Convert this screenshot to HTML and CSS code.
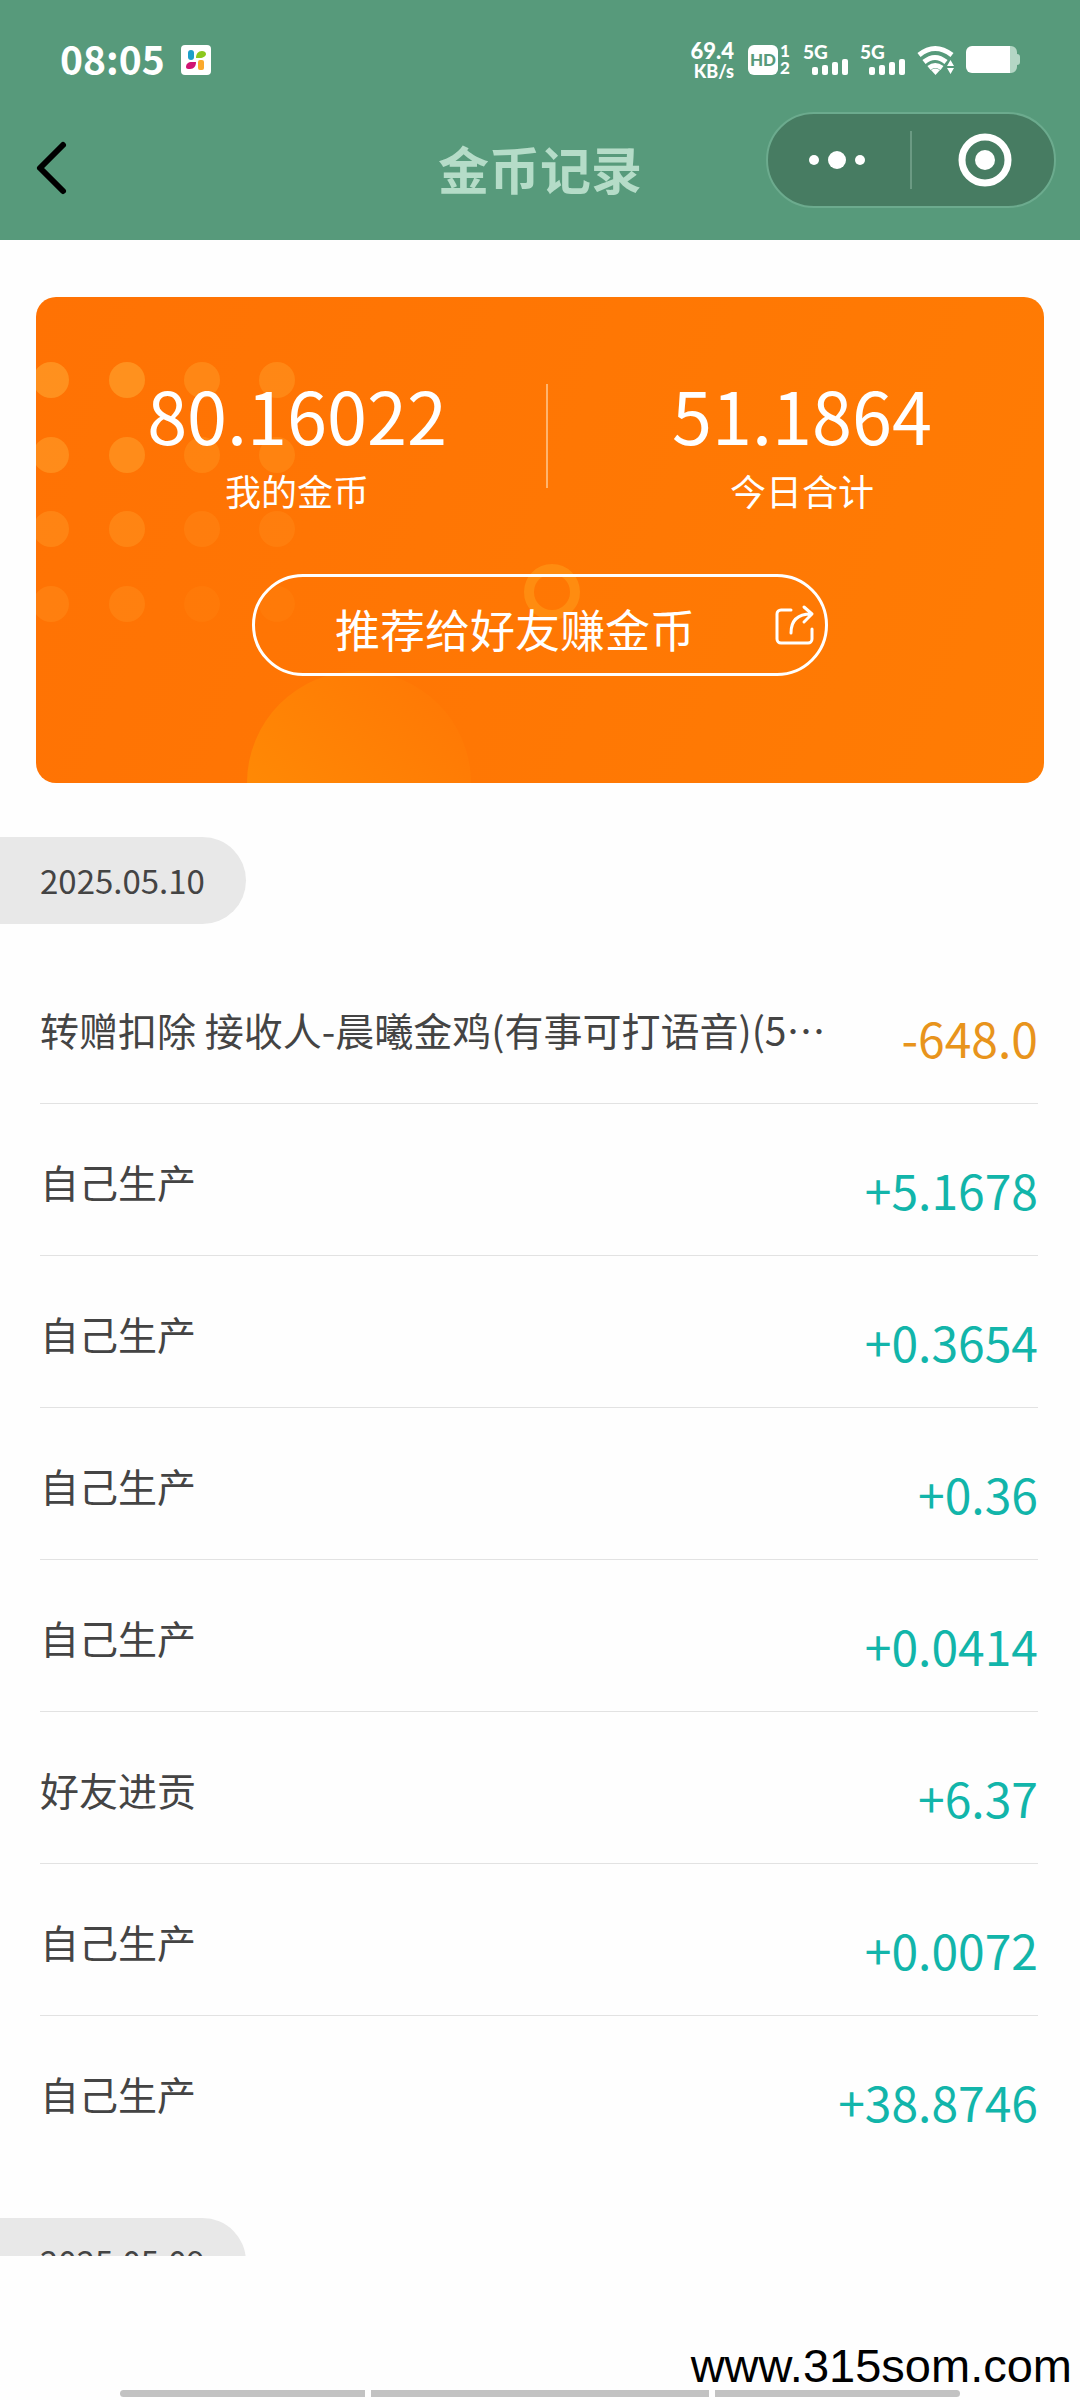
FILE: index.html
```html
<!DOCTYPE html>
<html lang="zh-CN">
<head>
    <meta charset="UTF-8">
    <meta name="viewport" content="width=device-width, initial-scale=1.0">
    <title>金币记录</title>
    <link rel="stylesheet" href="styles.css">
</head>
<body>

<header class="header">
    <div class="status-bar">
        <span class="time">08:05</span>
        <svg class="app-icon" width="30" height="30" viewBox="0 0 30 30">
            <rect width="30" height="30" rx="4" fill="#fff"/>
            <rect x="7" y="5" width="6" height="10" rx="3" fill="#1d9fc9"/>
            <path d="M15 13c0-4 2-7 6-7 2 0 4 1 4 3s-3 4-6 4z" fill="#8cc81e"/>
            <path d="M5 22c0-3 2-5 6-5h4c0 4-2 7-6 7-2 0-4 0-4-2z" fill="#d01472"/>
            <rect x="17" y="15" width="6" height="10" rx="2" fill="#fba92c"/>
        </svg>
        <div class="net-speed">
            <span class="speed-value">69.4</span>
            <span class="speed-unit">KB/s</span>
        </div>
        <svg class="hd" width="43" height="32" viewBox="0 0 43 32">
            <rect y="1" width="30" height="30" rx="6" fill="#fff"/>
            <text x="15" y="22" class="hd-text">HD</text>
            <text x="37" y="13" class="hd-num">1</text>
            <text x="37" y="30" class="hd-num">2</text>
        </svg>
        <svg class="signal" width="45" height="32" viewBox="0 0 45 32">
            <text x="0" y="15" class="signal-text">5G</text>
            <g fill="#fff">
                <rect x="9" y="23" width="6" height="8" rx="2"/>
                <rect x="19" y="21" width="6" height="10" rx="2"/>
                <rect x="29" y="18" width="6" height="13" rx="2"/>
                <rect x="39" y="15" width="6" height="16" rx="2"/>
            </g>
        </svg>
        <svg class="signal" width="45" height="32" viewBox="0 0 45 32">
            <text x="0" y="15" class="signal-text">5G</text>
            <g fill="#fff">
                <rect x="9" y="23" width="6" height="8" rx="2"/>
                <rect x="19" y="21" width="6" height="10" rx="2"/>
                <rect x="29" y="18" width="6" height="13" rx="2"/>
                <rect x="39" y="15" width="6" height="16" rx="2"/>
            </g>
        </svg>
        <svg class="wifi" width="38" height="32" viewBox="0 0 38 32">
            <g fill="none" stroke="#fff" stroke-width="5">
                <path d="M2 11q16-13 33 0"/>
                <path d="M7 18q11-9 22 0"/>
                <path d="M12 24q6-5 13 0"/>
            </g>
            <path d="M14 26q4-3 9 0l-4.500 5z" fill="#fff"/>
            <path d="M30 22l3.500-6 3.500 6zM30 24h7l-3.500 6z" fill="#fff"/>
        </svg>
        <svg class="battery" width="54" height="28" viewBox="0 0 54 28">
            <path d="M7 0h38a6 6 0 0 1 6 6v2a3 3 0 0 1 3 3v5a3 3 0 0 1-3 3v2a6 6 0 0 1-6 6H7z" fill="#b4d6c5"/>
            <path d="M6 0h38v27H6a6 6 0 0 1-6-6V6a6 6 0 0 1 6-6z" fill="#fff"/>
        </svg>
    </div>

    <div class="nav">
        <button class="back" aria-label="返回">
            <svg width="30" height="52" viewBox="0 0 30 52">
                <path d="M27 3L4 26l23 23" fill="none" stroke="#000" stroke-width="6" stroke-linecap="round" stroke-linejoin="round"/>
            </svg>
        </button>
        <h1 class="nav-title">金币记录</h1>
        <div class="capsule">
            <button class="capsule-btn capsule-more" aria-label="更多">
                <svg width="58" height="20" viewBox="0 0 58 20" fill="#fff">
                    <circle cx="6" cy="10" r="5"/>
                    <circle cx="29" cy="10" r="9"/>
                    <circle cx="52" cy="10" r="5"/>
                </svg>
            </button>
            <button class="capsule-btn capsule-close" aria-label="关闭">
                <svg width="54" height="54" viewBox="0 0 54 54">
                    <circle cx="27" cy="27" r="23" fill="none" stroke="#fff" stroke-width="7"/>
                    <circle cx="27" cy="27" r="10" fill="#fff"/>
                </svg>
            </button>
        </div>
    </div>
</header>

<main class="content">
    <section class="card">
        <svg class="card-bg" viewBox="0 0 1008 486" preserveAspectRatio="xMinYMin slice">
            <defs>
                <linearGradient id="bubble" x1="0" y1="1" x2="1" y2="0">
                    <stop offset="0" stop-color="#ff8f05"/>
                    <stop offset="1" stop-color="#ff7605"/>
                </linearGradient>
            </defs>
            <g fill="#ffa530">
                <g opacity="0.6"><circle cx="15" cy="83" r="18"/><circle cx="91" cy="83" r="18"/></g>
                <g opacity="0.4"><circle cx="166" cy="83" r="18"/><circle cx="241" cy="83" r="18"/></g>
                <g opacity="0.5"><circle cx="15" cy="158" r="18"/><circle cx="91" cy="158" r="18"/></g>
                <g opacity="0.3"><circle cx="166" cy="158" r="18"/><circle cx="241" cy="158" r="18"/></g>
                <g opacity="0.35"><circle cx="15" cy="232" r="18"/><circle cx="91" cy="232" r="18"/></g>
                <g opacity="0.2"><circle cx="166" cy="232" r="18"/><circle cx="241" cy="232" r="18"/></g>
                <g opacity="0.25"><circle cx="15" cy="307" r="18"/><circle cx="91" cy="307" r="18"/></g>
                <g opacity="0.1"><circle cx="166" cy="307" r="18"/><circle cx="241" cy="307" r="18"/></g>
            </g>
            <circle cx="323" cy="486" r="112" fill="url(#bubble)"/>
            <circle cx="516" cy="295" r="23" fill="none" stroke="#ff8c10" stroke-width="10"/>
        </svg>
        <div class="stats">
            <div class="stat">
                <div class="stat-value">80.16022</div>
                <div class="stat-label">我的金币</div>
            </div>
            <div class="stat stat-today">
                <div class="stat-value">51.1864</div>
                <div class="stat-label">今日合计</div>
            </div>
        </div>
        <button class="share">
            <span class="share-text">推荐给好友赚金币</span>
            <svg width="40" height="40" viewBox="0 0 40 40" fill="none" stroke="#fff" stroke-width="3" stroke-linecap="round" stroke-linejoin="round">
                <path d="M16 5H6a4 4 0 0 0-4 4v25a4 4 0 0 0 4 4h27a4 4 0 0 0 4-4V24"/>
                <path d="M16 28c0-12 6-19 20-19M29 2l8 7-8 8"/>
            </svg>
        </button>
    </section>

    <div class="date">2025.05.10</div>
    <ul class="records">
        <li class="record"><span class="name">转赠扣除 接收人-晨曦金鸡(有事可打语音)(5…</span><span class="amount minus">-648.0</span></li>
        <li class="record"><span class="name">自己生产</span><span class="amount">+5.1678</span></li>
        <li class="record"><span class="name">自己生产</span><span class="amount">+0.3654</span></li>
        <li class="record"><span class="name">自己生产</span><span class="amount">+0.36</span></li>
        <li class="record"><span class="name">自己生产</span><span class="amount">+0.0414</span></li>
        <li class="record"><span class="name">好友进贡</span><span class="amount">+6.37</span></li>
        <li class="record"><span class="name">自己生产</span><span class="amount">+0.0072</span></li>
        <li class="record"><span class="name">自己生产</span><span class="amount">+38.8746</span></li>
    </ul>

    <div class="date">2025.05.09</div>
</main>

<footer class="footer">
    <div class="site">www.315som.com</div>
    <div class="gesture-bar">
        <span class="bar"></span>
        <span class="bar bar-home"></span>
        <span class="bar"></span>
    </div>
</footer>

</body>
</html>
```
FILE: styles.css
```css
* {
    box-sizing: border-box;
}
body {
    font-family: "Noto Sans CJK SC", sans-serif;
    display: flex;
    flex-direction: column;
    height: 100vh;
    margin: 0;
    background-color: #fefefe;
    color: #444;
}
button {
    font-family: inherit;
    color: inherit;
    background: none;
    border: none;
    padding: 0;
    cursor: pointer;
}
svg {
    display: block;
    flex: none;
    overflow: visible;
}

/* header */
.header {
    flex: none;
    background-color: #579a7b;
    color: #fff;
}
.status-bar {
    display: flex;
    align-items: center;
    height: 96px;
    padding: 24px 60px 0;
}
.time {
    font-size: 39px;
    line-height: 68px;
    font-weight: bold;
    padding-bottom: 4px;
}
.app-icon {
    margin-left: 16px;
}
.net-speed {
    display: flex;
    flex-direction: column;
    align-items: flex-end;
    margin-left: auto;
    font-family: Lato, sans-serif;
    font-weight: 900;
}
.speed-value {
    font-size: 22px;
    line-height: 22px;
}
.speed-unit {
    font-size: 18px;
    line-height: 18px;
}
.hd {
    margin-left: 14px;
}
.hd-text, .hd-num, .signal-text {
    font-family: Lato, sans-serif;
    font-weight: 900;
    fill: #fff;
}
.hd-text {
    font-size: 17px;
    text-anchor: middle;
    fill: #579a7b;
}
.hd-num {
    font-size: 17px;
    text-anchor: middle;
}
.signal-text {
    font-size: 19px;
}
.signal {
    margin-left: 12px;
}
.wifi {
    margin-left: 12px;
}
.battery {
    margin-left: 11px;
}
.nav {
    display: grid;
    grid-template-columns: 1fr auto 1fr;
    align-items: center;
    height: 144px;
    padding: 0 24px;
}
.back {
    justify-self: start;
    margin-left: 12px;
}
.nav-title {
    margin: 0;
    font-size: 51px;
    line-height: 72px;
    font-weight: bold;
    color: #b5dcc8;
}
.capsule {
    display: flex;
    align-items: center;
    justify-self: end;
    align-self: start;
    width: 290px;
    height: 96px;
    margin-top: 16px;
    border: 2px solid #6cab8e;
    border-radius: 48px;
    background-color: #477c62;
}
.capsule-btn {
    display: flex;
    flex: 1;
    align-items: center;
    justify-content: center;
    height: 58px;
}
.capsule-more {
    padding-right: 4px;
}
.capsule-close {
    padding-left: 4px;
    border-left: 2px solid #6b9a83;
}

/* coin card */
.content {
    flex: 1;
    min-height: 0;
    overflow: hidden;
}
.card {
    position: relative;
    overflow: hidden;
    margin: 57px 36px 54px;
    padding: 74px 0 107px;
    border-radius: 20px;
    background: linear-gradient(110deg, #ff7204, #ff7c04);
    color: #fff;
}
.card-bg {
    position: absolute;
    top: 0;
    left: 0;
    width: 100%;
    height: 100%;
}
.stats {
    position: relative;
    display: grid;
    grid-template-columns: 1fr 1fr;
    padding-left: 12px;
}
.stat {
    position: relative;
    text-align: center;
}
.stat-today {
    padding-left: 14px;
}
.stat-today::before {
    content: "";
    position: absolute;
    left: 0;
    top: 13px;
    width: 2px;
    height: 104px;
    background-color: #ffb46e;
}
.stat-value {
    font-size: 72px;
    line-height: 86px;
}
.stat-label {
    font-size: 36px;
    line-height: 66px;
}
.share {
    position: relative;
    display: flex;
    align-items: center;
    width: 576px;
    height: 102px;
    margin: 51px auto 0;
    padding-right: 10px;
    border: 3px solid #fff;
    border-radius: 51px;
}
.share-text {
    flex: 1;
    padding-top: 8px;
    font-size: 45px;
    line-height: 66px;
}

/* records */
.date {
    width: 246px;
    padding-left: 40px;
    border-radius: 0 44px 44px 0;
    background-color: #e8e8e8;
    font-size: 33px;
    line-height: 87px;
}
.records {
    list-style: none;
    margin: 28px 42px 50px 40px;
    padding: 0;
}
.record {
    display: flex;
    justify-content: space-between;
    align-items: flex-start;
    padding: 47px 0 28px;
    border-bottom: 1px solid #e2e2e2;
}
.record:last-child {
    border-bottom-color: transparent;
}
.name {
    font-size: 39px;
    line-height: 60px;
}
.amount {
    font-size: 48px;
    line-height: 76px;
    color: #12b5aa;
}
.minus {
    color: #e8941c;
}

/* footer */
.footer {
    display: flex;
    flex: none;
    flex-direction: column;
    justify-content: flex-end;
    height: 144px;
    padding-bottom: 3px;
}
.site {
    padding-right: 8px;
    font-family: "Liberation Sans", Arial, sans-serif;
    font-size: 47px;
    line-height: 48px;
    text-align: right;
    color: #000;
}
.gesture-bar {
    display: flex;
    gap: 6px;
    padding: 0 120px;
}
.bar {
    width: 245px;
    height: 7px;
    background-color: #c2c2c2;
}
.bar:first-child {
    border-radius: 4px 0 0 4px;
}
.bar:last-child {
    border-radius: 0 4px 4px 0;
}
.bar-home {
    flex: 1;
}
```
